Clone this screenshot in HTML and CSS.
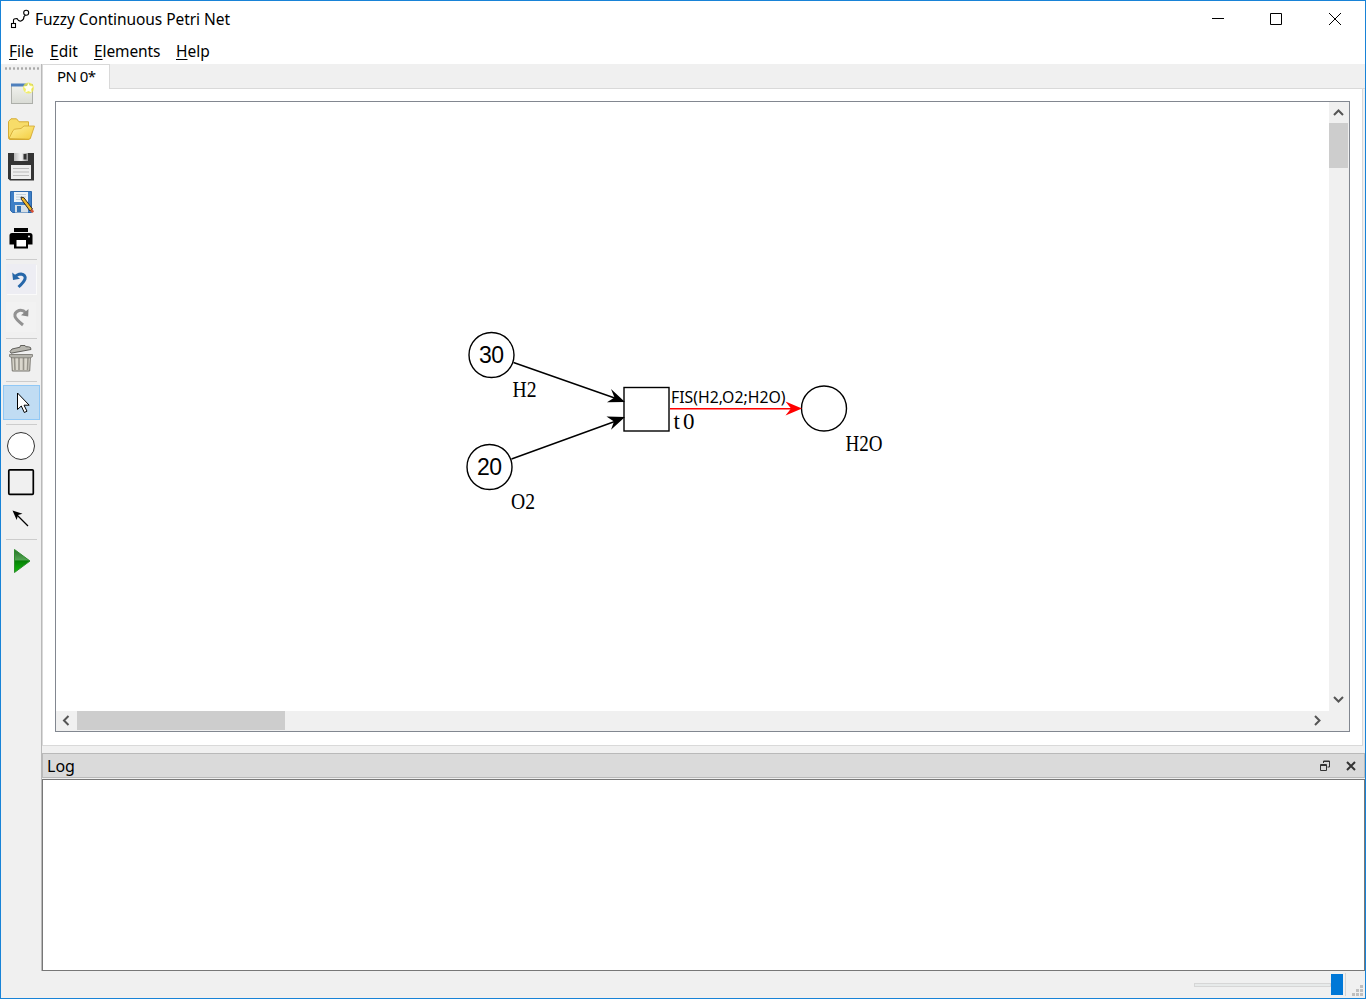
FILE: index.html
```html
<!DOCTYPE html>
<html lang="en">
<head>
<meta charset="utf-8">
<title>Fuzzy Continuous Petri Net</title>
<link rel="stylesheet" href="styles.css">
</head>
<body>
<div class="window">
  <header class="titlebar">
    <svg class="app-icon" width="20" height="20" viewBox="10 9 20 20" fill="none" stroke="#000" stroke-width="1.1"><rect x="11.500" y="23.500" width="4" height="4"/><circle cx="26.200" cy="12.800" r="2.500"/><path d="M13.500 23V20Q13.500 18.500 17 18.500Q18.500 21.500 21 21Q24 20 24 16.500L25.500 15.200"/></svg>
    <h1 class="title">Fuzzy Continuous Petri Net</h1>
    <svg class="caption" width="140" height="20" viewBox="1208 9 140 20" fill="none" stroke="#000"><path d="M1212 18.500h12M1270.500 13.500h11v11h-11zM1329 13l12 12M1341 13l-12 12"/></svg>
  </header>
  <nav class="menu"><span class="m-file"><u>F</u>ile</span><span class="m-edit"><u>E</u>dit</span><span class="m-elements"><u>E</u>lements</span><span class="m-help"><u>H</u>elp</span></nav>
  <div class="main">
    <aside class="toolbar">
      <div class="grip"></div>
      <button class="tool t-new"><svg width="30" height="30" viewBox="6 79 30 30"><defs><linearGradient id="paper" x2="0" y2="1"><stop stop-color="#f2f3ef"/><stop offset="1" stop-color="#d9dbd5"/></linearGradient></defs><rect x="11.500" y="84.500" width="21" height="19" fill="url(#paper)" stroke="#adafaa"/><path d="M11 83.500h19v3H11z" fill="#4f80bd"/><circle cx="28.500" cy="88" r="5.500" fill="#f4ef45" opacity=".75"/><path d="m28.500 83 1.500 3 3.500.5-2.500 2.500.7 3.500-3.200-1.600-3.200 1.600.7-3.500-2.500-2.500 3.500-.5z" fill="#fffef0"/></svg></button>
      <button class="tool t-open"><svg width="30" height="30" viewBox="6 115 30 30"><defs><linearGradient id="folder" x2="1" y2="1"><stop stop-color="#fff09a"/><stop offset="1" stop-color="#f3cd3e"/></linearGradient></defs><path d="M8.500 137V121.500l2.500-2.700h5.500l2.500 3h9.500v5H32L30 138.500q-.5 1-2 1H10q-1.500 0-1.500-2.500z" fill="#f7dc69" stroke="#d6ac32"/><path d="m9 138.500 4-8q1-1.500 3-1.500l5-.5 3-2.500h10.500L30.500 138q-.5 1.200-2 1.200z" fill="url(#folder)" stroke="#d1a52d" stroke-width=".8"/></svg></button>
      <button class="tool t-save"><svg width="30" height="30" viewBox="6 152 30 30"><defs><linearGradient id="steel"><stop stop-color="#bbb"/><stop offset=".5" stop-color="#f4f4f4"/><stop offset="1" stop-color="#999"/></linearGradient></defs><path d="M8 153h26v27.500H10l-2-2z" fill="#353535"/><path d="M14 153h14v8H14z" fill="url(#steel)"/><path d="M23.500 154h3v5.500h-3z" fill="#333"/><path d="M11 165h20v14H11z" fill="#eee"/><path d="M13 168.500h16M13 172h16M13 175.500h16" stroke="#bbb"/></svg></button>
      <button class="tool t-saveas"><svg width="30" height="30" viewBox="6 187 30 30"><path d="M10.500 191.500h21v21H12.500l-2-2z" fill="#3e7fc6" stroke="#2d68ab"/><path d="M14 192h14v10H14z" fill="#eef3f6"/><path d="M16 194.500h10M16 197h10M16 199.500h10" stroke="#b5c7d6" stroke-width=".8"/><path d="M15 205h13v7.500H15z" fill="#d5dfe7"/><path d="M17 206h4v6h-4z" fill="#3472b2"/><path d="m21 197 3 .8 8.500 11.200-2.500 2-8.500-11.500z" fill="#f0b728" stroke="#342c25" stroke-width="1"/><path d="m30 211 2.500-2 1.500 2.500-1.500 1.500z" fill="#d65238"/></svg></button>
      <button class="tool t-print"><svg width="30" height="30" viewBox="6 223 30 30"><path d="M14 228h14v4H14zM12 233h18q2.500 0 2.500 2.500v9H28v4H14v-4H9.500v-9Q9.500 233 12 233z"/><path d="M16.500 240h9.500v6.500h-9.500z" fill="#fff"/><circle cx="29" cy="236.500" r="1" fill="#fff"/></svg></button>
      <div class="rule r-one"></div>
      <button class="tool t-undo shaded"><svg width="30" height="30" viewBox="6 264 30 30" fill="none" stroke="#2767a9" stroke-width="3"><path d="M14 278q3-4 7-4 5 1 4 5-1 3-6.500 8"/><path d="M12.200 272.500l.8 7.500 7-1.300z" fill="#2767a9" stroke="none"/></svg></button>
      <button class="tool t-redo shaded-redo"><svg width="30" height="30" viewBox="6 302 30 30" fill="none" stroke="#929292" stroke-width="3"><path d="M26 313q-3-3.500-7-2.500-5 2-4 6 1 3 8 8.500"/><path d="m28.500 309-.3 7.500-7.200-1.200z" fill="#888" stroke="none"/></svg></button>
      <div class="rule r-two"></div>
      <button class="tool t-trash"><svg width="30" height="32" viewBox="6 343 30 32"><path d="m11.500 355 .8 16h17.400l.8-16z" fill="#dad7cd" stroke="#77756e"/><path d="m14.500 357.500.5 12.500m4-12.500v12.500m4.500-12.500V370m4.500-12.500-.5 12.500" stroke="#96938a" stroke-width="1.600"/><path d="M9.500 354.500v2l2.500 1.300h18.500l2-1.300v-2z" fill="#b5b4ad" stroke="#77756e" stroke-width=".8"/><path d="m10 351.500 2-2.500 8-1.800.5-1.700h4.500l.8 1.200q3-.2 4.700.8l.5 2-20 3.700z" fill="#b8b7b0" stroke="#55544f" stroke-width=".9"/></svg></button>
      <div class="rule r-three"></div>
      <button class="tool t-select"><svg width="30" height="30" viewBox="6 389 30 30"><path d="M17.500 394v16.500l3.800-3.500 3 6.500 2.700-1.300-3-6h5.200z" fill="#fff" stroke="#000"/></svg></button>
      <div class="rule r-four"></div>
      <button class="tool t-place"><svg width="30" height="30" viewBox="6 431 30 30"><circle cx="21" cy="446" r="13.500" fill="#fff" stroke="#333"/></svg></button>
      <button class="tool t-transition"><svg width="30" height="30" viewBox="6 467 30 30"><rect x="8.800" y="469.800" width="24.500" height="24.500" rx="1" fill="none" stroke="#000" stroke-width="1.700"/></svg></button>
      <button class="tool t-arc"><svg width="30" height="30" viewBox="6 504 30 30"><path d="m16 514 12 12" stroke="#000" stroke-width="1.300"/><path d="m12.500 510.500 10 3.300-4.500 1.200-1.300 5z"/></svg></button>
      <div class="rule r-five"></div>
      <button class="tool t-run"><svg width="30" height="30" viewBox="6 546 30 30"><defs><linearGradient id="go" x2="0" y2="1"><stop stop-color="#276f27"/><stop offset=".45" stop-color="#51a451"/><stop offset=".5" stop-color="#078007"/><stop offset="1" stop-color="#11bd0b"/></linearGradient></defs><path d="M14.500 549.500 30 561l-15.500 11.500z" fill="url(#go)" stroke="#2e8d2d"/></svg></button>
    </aside>
    <section class="work">
      <div class="tabs"><div class="tab"><span>PN 0*</span></div></div>
      <div class="pane">
        <div class="view">
          <svg class="net" width="1273" height="609" viewBox="56 102 1273 609">
            <g fill="none" stroke="#000" stroke-width="1.400"><circle cx="491.500" cy="355" r="22.500"/><circle cx="489.500" cy="467" r="22.500"/><circle cx="824" cy="408.500" r="22.500"/><rect x="624" y="387.500" width="45" height="43.500"/><path d="m513.500 362.500 104 36.500M511.500 459l106-38.500"/></g>
            <path d="m625 402-18 .2 7.500-4.700-3.500-8.500zM625 417l-18.500-.5 7.500 5-3 8.300z"/>
            <path d="M670 408.700h121" stroke="red" stroke-width="1.500"/><path d="m802 408.500-16.500-7 5.500 7-5.500 7z" fill="red"/>
            <g class="tokens"><text x="479" y="362.500" textLength="25">30</text><text x="477" y="474.500" textLength="25">20</text></g>
            <text class="fis" x="671" y="403" textLength="114.500" lengthAdjust="spacingAndGlyphs">FIS(H2,O2;H2O)</text>
            <g class="names"><text x="512.500" y="397" textLength="24" lengthAdjust="spacingAndGlyphs">H2</text><text x="511" y="509" textLength="24" lengthAdjust="spacingAndGlyphs">O2</text><text x="673.500 683" y="429">t0</text><text x="845.500" y="451" textLength="37" lengthAdjust="spacingAndGlyphs">H2O</text></g>
          </svg>
          <div class="vscroll"><svg width="19" height="21" viewBox="0 0 19 21"><path d="m5 13 4.500-4.500L14 13"/></svg><div class="vthumb"></div><svg class="end" width="19" height="21" viewBox="0 0 19 21"><path d="m5 7 4.500 4.500L14 7"/></svg></div>
          <div class="hscroll"><svg width="21" height="19" viewBox="0 0 21 19"><path d="M12.500 5 8 9.500l4.500 4.500"/></svg><div class="hthumb"></div><svg class="end" width="21" height="19" viewBox="0 0 21 19"><path d="m7 5 4.500 4.500L7 14"/></svg></div>
          <div class="corner"></div>
        </div>
      </div>
      <div class="dock">
        <div class="dock-title"><span>Log</span><svg width="40" height="16" viewBox="1318 758 40 16" fill="none" stroke="#333"><path d="M1323.500 763v-2h6v6h-2M1320.500 764.500h6v6h-6zM1323 761.500h7M1320 765.500h7"/><path d="m1347 762 8 8m0-8-8 8" stroke-width="2"/></svg></div>
        <div class="log"></div>
      </div>
    </section>
  </div>
  <footer class="status"><div class="slider"><div class="track"></div><div class="handle"></div></div><div class="divider"></div><svg class="size-grip" width="11" height="12" viewBox="0 0 11 12" fill="#bfbfbf"><path d="M8 0h3v3H8zM4 4h3v3H4zM8 4h3v3H8zM0 8h3v3H0zM4 8h3v3H4zM8 8h3v3H8z"/></svg></footer>
</div>
</body>
</html>
```
FILE: styles.css
```css
* { box-sizing: border-box; }
body { margin: 0; background: #fff; color: #000; font: 16px "Noto Sans", sans-serif; }
svg { display: block; flex: none; }
.window { width: 1366px; height: 999px; border: 1px solid #1883d7; display: flex; flex-direction: column; background: #fff; overflow: hidden; }
.titlebar { height: 36px; flex: none; display: flex; align-items: center; padding: 0 17px 0 9px; }
.title { margin: 0 0 0 5px; font-size: 15.5px; font-weight: 400; letter-spacing: -.05px; white-space: nowrap; }
.caption { margin-left: auto; }
.menu { height: 27px; flex: none; display: flex; align-items: center; padding: 2px 0 0 8px; font-size: 15.5px; }
.menu span { white-space: nowrap; line-height: 25px; }
.menu u { text-underline-offset: 2px; text-decoration-thickness: 1px; }
.m-file { width: 41px; }
.m-edit { width: 44px; }
.m-elements { width: 82px; letter-spacing: -.1px; }
.main { height: 907px; flex: none; display: flex; background: #f0f0f0; }
.toolbar { width: 41px; border-right: 1px solid #b9b9b9; display: flex; flex-direction: column; align-items: center; flex: none; padding-top: 3px; }
.grip { width: 35px; height: 3px; background: radial-gradient(circle, #aaa 1px, transparent 1.4px) 0 0 / 4px 3px; flex: none; }
.tool { width: 30px; height: 30px; border: 0; padding: 0; background: transparent; flex: none; }
.t-new { margin-top: 9px; }
.t-open { margin-top: 6px; }
.t-save { margin-top: 7px; }
.t-saveas { margin-top: 5px; }
.t-print { margin-top: 6px; }
.rule { width: 31px; height: 1px; background: #ccc; flex: none; }
.r-one { margin-top: 6px; }
.t-undo { margin-top: 4px; }
.shaded { background: #ededf3; box-shadow: 1px 1px #fafafa; }
.shaded-redo { background: #f2f2f2; }
.t-redo { margin-top: 8px; }
.r-two { margin-top: 6px; }
.t-trash { height: 32px; margin-top: 4px; }
.r-three { margin-top: 6px; }
.t-select { width: 37px; height: 35px; margin-top: 3px; border: 1px solid #90c8f6; background: #c0dcf3; display: flex; justify-content: center; align-items: center; }
.r-four { margin-top: 4px; }
.t-place { margin-top: 6px; }
.t-transition { margin-top: 6px; }
.t-arc { margin-top: 7px; }
.r-five { margin-top: 5px; }
.t-run { margin-top: 6px; }
.work { width: 1323px; display: flex; flex-direction: column; }
.tabs { height: 25px; flex: none; border-bottom: 1px solid #d9d9d9; display: flex; }
.tab { width: 68px; height: 25px; background: #fff; border: 1px solid #d9d9d9; border-bottom: 0; padding-left: 14px; font: 15px/22px "Noto Sans", sans-serif; letter-spacing: -.55px; white-space: nowrap; }
.pane { width: 1321px; height: 657px; border: 1px solid #d9d9d9; border-top: 0; background: #fff; padding: 12px; flex: none; }
.view { width: 1295px; height: 631px; border: 1px solid #828790; display: grid; grid-template: 609px 20px / 1273px 20px; }
.tokens { font: 23px "Liberation Sans", sans-serif; }
.fis { font: 15.5px "Noto Sans", sans-serif; }
.names { font: 23px "Liberation Serif", serif; }
.vscroll, .hscroll { display: flex; background: #f0f0f0; }
.vscroll { flex-direction: column; }
.vscroll svg, .hscroll svg { fill: none; stroke: #555; stroke-width: 2; }
.vthumb { width: 19px; height: 45px; background: #cdcdcd; }
.vscroll .end { margin-top: auto; }
.hthumb { width: 208px; height: 19px; background: #cdcdcd; }
.hscroll .end { margin-left: auto; }
.corner { background: #f0f0f0; }
.dock { margin-top: 7px; display: flex; flex-direction: column; }
.dock-title { height: 25px; border: 1px solid #b9b9b9; background: #dadada; display: flex; align-items: center; justify-content: space-between; padding: 0 6px 0 4px; }
.log { height: 192px; margin-top: 1px; background: #fff; border: 1px solid #777; }
.status { height: 27px; flex: none; background: #f0f0f0; display: flex; justify-content: flex-end; align-items: flex-start; padding: 3px 2px 0 0; }
.slider { width: 150px; height: 21px; display: flex; align-items: center; }
.track { width: 137px; height: 4px; border: 1px solid #d6d6d6; background: #e7eaea; flex: none; }
.handle { width: 12px; height: 21px; background: #0078d7; }
.divider { width: 1px; height: 23px; background: #d5d5d5; margin: -1px 6px 0 1px; }
.size-grip { margin-top: 11px; }
```
